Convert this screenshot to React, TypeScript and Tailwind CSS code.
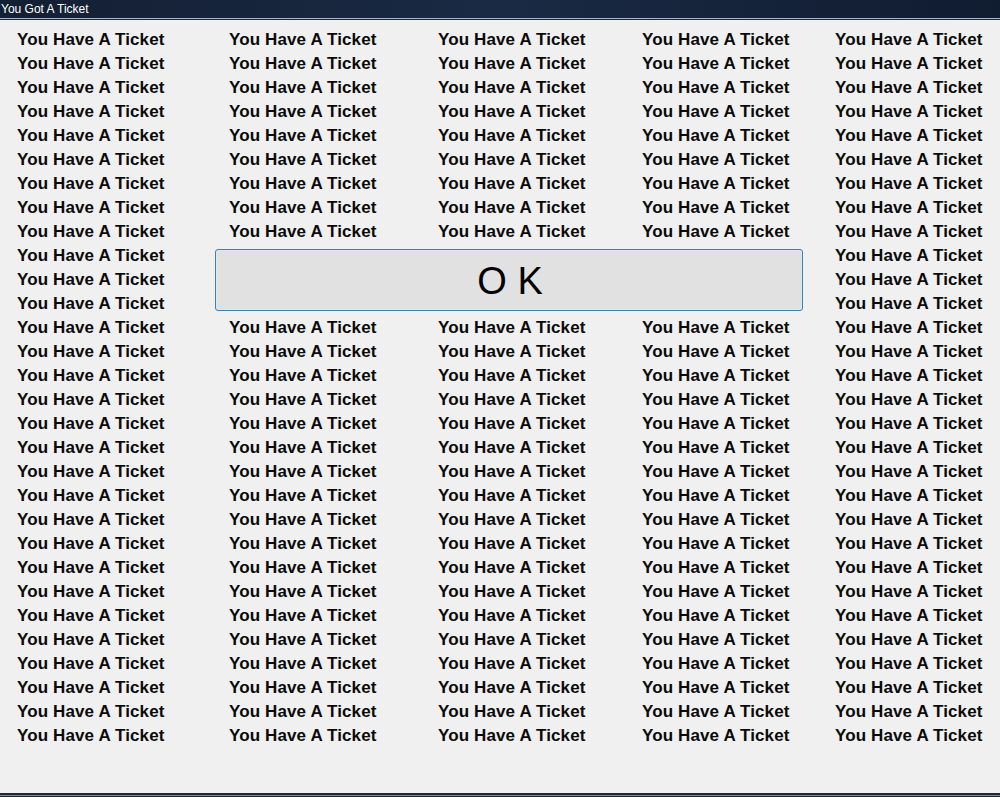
import React from "react";

const COLS = 5;
const ROWS = 30;

export default function App() {
  const cells: React.ReactNode[] = [];
  for (let r = 0; r < ROWS; r++) {
    for (let c = 0; c < COLS; c++) {
      if (r >= 9 && r <= 11 && c >= 1 && c <= 3) {
        if (r === 9 && c === 1) {
          cells.push(
            <div
              key="ok"
              className="col-start-2 col-end-5 row-start-10 row-end-13 ml-[-14px] mr-[32px] my-[5px] flex items-center justify-center rounded-[3px] border border-[#3c7fb1] bg-[#e1e1e1] text-[38px] leading-none text-black shadow-[inset_0_0_0_1px_#dbeaf6]"
              style={{ fontFamily: '"Liberation Sans", Arial, sans-serif' }}
            >
              <span className="pl-[2px] pt-[2px]">O K</span>
            </div>
          );
        }
        continue;
      }
      cells.push(
        <div
          key={`${r}-${c}`}
          className="whitespace-nowrap text-[17px] font-bold leading-[24px] tracking-[0.12px] text-[#0a0a0a]"
        >
          You Have A Ticket
        </div>
      );
    }
  }

  return (
    <div
      className="flex h-[797px] w-[1000px] flex-col overflow-hidden bg-[#f0f0f0]"
      style={{ fontFamily: '"Liberation Sans", Arial, sans-serif' }}
    >
      <div className="flex h-[18px] items-center bg-gradient-to-r from-[#131f33] via-[#1a2a44] to-[#101c30] pl-[1px] text-[12px] text-white">
        You Got A Ticket
      </div>
      <div className="h-[1px] bg-[#a9b4bf]" />
      <div className="h-[1px] bg-[#1c2a38]" />
      <div className="grid grid-cols-[212px_209px_204px_193px_1fr] auto-rows-[24px] pl-[17px] pt-[8px]">
        {cells}
      </div>
      <div className="flex-1" />
      <div className="h-[2px] bg-[#1d2b39]" />
      <div className="h-[1px] bg-[#7f8d99]" />
      <div className="h-[1px] bg-[#1d2b39]" />
    </div>
  );
}
